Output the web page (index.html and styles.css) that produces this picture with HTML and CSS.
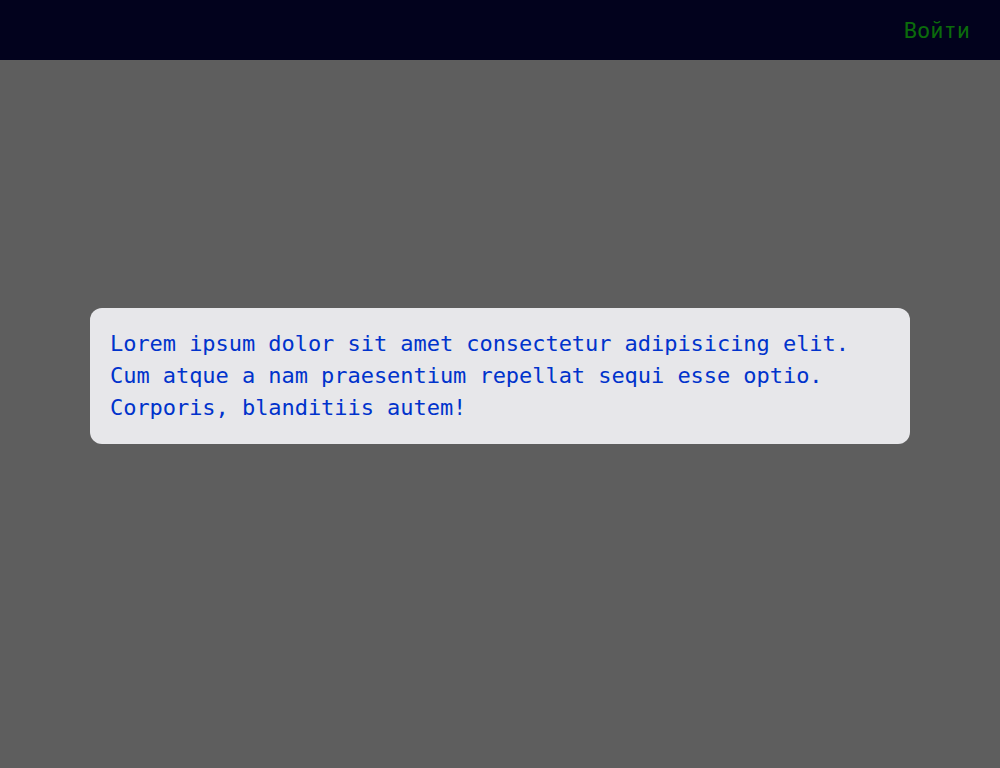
FILE: index.html
```html
<!DOCTYPE html>
<html lang="ru">
<head>
<meta charset="utf-8">
<title>Page</title>
<link rel="stylesheet" href="styles.css">
</head>
<body>
<header class="topbar">
  <a class="login" href="#">Войти</a>
</header>
<main class="content">
  <div class="card">
    <p class="card-text">Lorem ipsum dolor sit amet consectetur adipisicing elit. Cum atque a nam praesentium repellat sequi esse optio. Corporis, blanditiis autem!</p>
  </div>
</main>
</body>
</html>
```

FILE: styles.css
```css
* { box-sizing: border-box; }
html, body { margin: 0; padding: 0; }
body {
  background: #5e5e5e;
  font-family: "DejaVu Sans Mono", "Liberation Mono", monospace;
  font-size: 22px;
  min-height: 768px;
}
.topbar {
  height: 60px;
  background: #02021d;
  display: flex;
  align-items: center;
  justify-content: flex-end;
  padding: 2px 30px 0;
}
.login {
  color: #0b6b0b;
  text-decoration: none;
  font-size: 22px;
  line-height: 1;
}
.content {
  padding: 248px 90px 0;
}
.card {
  background: #e7e7ea;
  border-radius: 12px;
  padding: 20px;
}
.card-text {
  margin: 0;
  color: #0033cc;
  line-height: 32px;
  letter-spacing: -0.05px;
}
```
